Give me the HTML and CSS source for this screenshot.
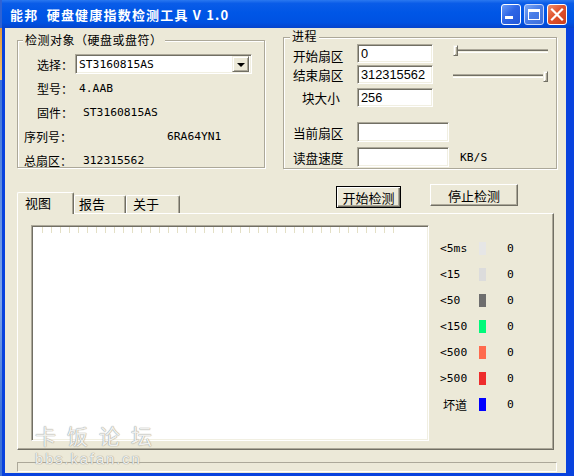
FILE: index.html
```html
<!DOCTYPE html>
<html lang="zh-CN">
<head>
<meta charset="utf-8">
<title>能邦 硬盘健康指数检测工具 V 1.0</title>
<link rel="stylesheet" href="styles.css">
</head>
<body>
<div class="window">
  <div class="titlebar">
    <span class="title">能邦&nbsp; 硬盘健康指数检测工具 V 1.0</span>
    <div class="tb-btns">
      <span class="tb tb-min"><svg width="18" height="19" viewBox="0 0 18 19"><rect x="3" y="11" width="8" height="3" fill="#fff"/></svg></span>
      <span class="tb tb-max"><svg width="18" height="19" viewBox="0 0 18 19"><rect x="3.5" y="4.5" width="11" height="10" fill="none" stroke="#fff"/><rect x="3" y="4" width="12" height="3" fill="#fff"/></svg></span>
      <span class="tb tb-close"><svg width="18" height="19" viewBox="0 0 18 19"><path d="M4 4.5 L14 14.5 M14 4.5 L4 14.5" stroke="#fff" stroke-width="2.2" stroke-linecap="square"/></svg></span>
    </div>
  </div>

  <div class="client">
    <div class="top-row">
      <div class="group info">
        <div class="group-title">检测对象（硬盘或盘符）</div>
        <div class="row r-in">
          <span class="lab-select">选择：</span>
          <div class="combo sunken">
            <span class="mono">ST3160815AS</span>
            <span class="combo-btn raised"><span class="tri"></span></span>
          </div>
        </div>
        <div class="row r-in"><span class="lab-model">型号：</span><span class="mono">4.AAB</span></div>
        <div class="row r-in"><span class="lab-fw">固件：</span><span class="mono">ST3160815AS</span></div>
        <div class="row r-out"><span class="lab-sn">序列号：</span><span class="mono">6RA64YN1</span></div>
        <div class="row r-out"><span class="lab-total">总扇区：</span><span class="mono">312315562</span></div>
      </div>

      <div class="group progress">
        <div class="group-title">进程</div>
        <div class="prow first">
          <span class="plabel">开始扇区</span>
          <span class="field sunken">0</span>
          <div class="slider s1"><span class="thumb raised"></span></div>
        </div>
        <div class="prow m2">
          <span class="plabel">结束扇区</span>
          <span class="field sunken">312315562</span>
          <div class="slider s2"><span class="thumb raised end"></span></div>
        </div>
        <div class="prow m4">
          <span class="plabel ind">块大小</span>
          <span class="field sunken">256</span>
        </div>
        <div class="prow tall m15">
          <span class="plabel">当前扇区</span>
          <span class="field wide sunken"></span>
        </div>
        <div class="prow tall m5">
          <span class="plabel">读盘速度</span>
          <span class="field wide sunken"></span>
          <span class="unit mono">KB/S</span>
        </div>
      </div>
    </div>

    <div class="mid-row">
      <div class="tabs">
        <span class="tab active t1">视图</span>
        <span class="tab t2">报告</span>
        <span class="tab t3">关于</span>
      </div>
      <span class="btn default">开始检测</span>
      <span class="btn stop">停止检测</span>
    </div>

    <div class="panel">
      <div class="chart"></div>
      <div class="legend">
        <div class="lrow"><span class="lname mono">&lt;5ms</span><span class="sw c1"></span><span class="lval mono">0</span></div>
        <div class="lrow"><span class="lname mono">&lt;15</span><span class="sw c2"></span><span class="lval mono">0</span></div>
        <div class="lrow"><span class="lname mono">&lt;50</span><span class="sw c3"></span><span class="lval mono">0</span></div>
        <div class="lrow"><span class="lname mono">&lt;150</span><span class="sw c4"></span><span class="lval mono">0</span></div>
        <div class="lrow"><span class="lname mono">&lt;500</span><span class="sw c5"></span><span class="lval mono">0</span></div>
        <div class="lrow"><span class="lname mono">&gt;500</span><span class="sw c6"></span><span class="lval mono">0</span></div>
        <div class="lrow"><span class="lname cjk">坏道</span><span class="sw c7"></span><span class="lval mono">0</span></div>
      </div>
    </div>

    <div class="status"></div>
  </div>

  <div class="watermark">
    <div class="wm-cn">卡饭论坛</div>
    <div class="wm-en">bbs.kafan.cn</div>
  </div>
</div>
</body>
</html>
```

FILE: styles.css
```css
* { box-sizing: border-box; }
html, body { margin: 0; height: 100%; overflow: hidden; }
body {
  background: linear-gradient(to bottom, #2e62d4 0, #2e62d4 28px, #e29a3c 28px, #f0c070 80px, #3d72d8 80px, #7fa4e8 300px, #3d72d8 420px);
  font-family: "Noto Sans CJK SC", sans-serif;
  font-size: 12px;
  color: #000;
}
.window {
  position: relative;
  margin-left: 2px;
  width: 572px;
  height: 476px;
  display: flex;
  flex-direction: column;
}
.titlebar {
  flex: none;
  height: 28px;
  display: flex;
  align-items: center;
  padding: 0 7px 0 8px;
  background: linear-gradient(to bottom, #2a78f0 0, #0a5ce8 12%, #0056e6 45%, #0052e2 80%, #0644cc 100%);
  color: #fff;
}
.title {
  font-weight: bold;
  font-size: 13px;
  letter-spacing: 1.2px;
  white-space: pre;
  margin-top: 1px;
}
.tb-btns { margin-left: auto; display: flex; gap: 3px; margin-top: 1px; }
.tb {
  width: 20px; height: 21px;
  border: 1px solid #fff;
  border-radius: 3px;
  display: flex;
  overflow: hidden;
}
.tb svg { display: block; }
.tb-min { background: linear-gradient(135deg, #6a9cf8 0, #2e66e6 45%, #2358d8 100%); }
.tb-max { background: linear-gradient(135deg, #7aa6f4 0, #4a7ee8 45%, #3d6fdc 100%); border-color: #c8d8fb; }
.tb-close { background: linear-gradient(135deg, #f0906c 0, #e0532e 45%, #cc3f1c 100%); }

.client {
  flex: 1;
  background: #ECE9D8;
  border-style: solid;
  border-color: #0842de;
  border-width: 0 8px 3px 3px;
  padding: 9px 9px 0 12px;
}

/* group boxes */
.top-row { display: flex; align-items: flex-start; gap: 18px; }
.group {
  border: 1px solid #ACA899;
  box-shadow: inset 1px 1px 0 #fff, 1px 1px 0 #fff;
}
.group-title {
  display: table;
  margin: -8px 0 0 5px;
  padding: 0 2px;
  line-height: 14px;
  background: #ECE9D8;
  letter-spacing: 0.5px;
}
.info { width: 248px; height: 128px; margin-top: 3px; }
.info .group-title { margin-bottom: 5px; }
.progress { width: 274px; height: 132px; }
.progress .group-title { margin-left: 6px; margin-top: -9px; margin-bottom: 1px; font-size: 12px; letter-spacing: 0.5px; }

.row { display: flex; align-items: center; height: 24px; }
.r-in { padding-left: 19px; }
.r-out { padding-left: 6px; }
.lab-select { width: 38px; }
.lab-model { width: 42px; }
.lab-fw { width: 46px; }
.lab-sn { width: 143px; }
.lab-total { width: 59px; }
.mono { font-family: "DejaVu Sans Mono", "Liberation Mono", monospace; font-size: 11.3px; }

.sunken {
  background: #fff;
  border: 1px solid;
  border-color: #ACA899 #fff #fff #ACA899;
  box-shadow: inset 1px 1px 0 #716F64, inset -1px -1px 0 #F1EFE2;
}
.raised {
  background: #ECE9D8;
  border: 1px solid;
  border-color: #F1EFE2 #716F64 #716F64 #F1EFE2;
  box-shadow: inset 1px 1px 0 #fff, inset -1px -1px 0 #ACA899;
}
.combo {
  width: 177px; height: 20px;
  display: flex; align-items: center;
  padding: 0 2px 0 3px;
}
.combo-btn {
  margin-left: auto;
  width: 17px; height: 16px;
  display: flex; align-items: center; justify-content: center;
}
.tri {
  width: 0; height: 0;
  border-left: 4px solid transparent;
  border-right: 4px solid transparent;
  border-top: 4px solid #000;
  margin-top: 1px;
}

/* progress group */
.prow { display: flex; align-items: center; height: 19px; padding-left: 9px; }
.prow.tall { height: 20px; }
.m2 { margin-top: 2px; }
.m4 { margin-top: 4px; }
.m15 { margin-top: 15px; }
.m5 { margin-top: 5px; }
.plabel { width: 64px; font-size: 12.6px; line-height: 17px; }
.prow.first .plabel { margin-top: 4px; }
.plabel.ind { padding-left: 9px; }
.field {
  width: 76px; height: 19px;
  padding-left: 3px;
  font-family: "Liberation Sans", sans-serif;
  font-size: 12.8px;
  line-height: 17px;
}
.field.wide { width: 92px; height: 20px; }
.slider {
  margin-left: 20px;
  width: 95px; height: 11px;
  display: flex; align-items: center;
  background: linear-gradient(to bottom, #ACA899 0, #ACA899 1px, #716F64 1px, #716F64 2px, #F1EFE2 2px, #F1EFE2 3px, #fff 3px, #fff 4px) center / 100% 4px no-repeat;
}
.s1 { margin-bottom: 6px; }
.s2 { margin-top: 3px; }
.thumb { width: 5px; height: 11px; }
.thumb.end { margin-left: auto; }
.unit { margin-left: 11px; }

/* tabs + buttons */
.mid-row { display: flex; align-items: flex-start; height: 29px; margin-top: 15px; }
.tabs {
  align-self: flex-end;
  display: flex; align-items: flex-end;
  position: relative; z-index: 1;
  margin-bottom: -1px;
}
.tab {
  height: 18px;
  line-height: 16px;
  font-size: 13px;
  background: #ECE9D8;
  border-top: 1px solid #fff;
  border-left: 1px solid #fff;
  border-right: 1px solid #716F64;
  box-shadow: inset -1px 0 0 #ACA899;
  border-radius: 2px 2px 0 0;
  margin-bottom: 1px;
}
.tab.active { height: 22px; line-height: 19px; margin-bottom: 0; }
.t1 { width: 57px; padding-left: 7px; }
.t2 { width: 52px; padding-left: 4px; }
.t3 { width: 54px; padding-left: 6px; }
.btn {
  height: 22px;
  font-size: 13px;
  display: flex; align-items: center; justify-content: center;
  background: #ECE9D8;
}
.btn.default {
  width: 65px;
  margin-left: 156px;
  margin-top: 2px;
  border: 1px solid #000;
  box-shadow: inset 1px 1px 0 #fff, inset -1px -1px 0 #716F64, inset -2px -2px 0 #ACA899;
}
.btn.stop {
  width: 88px;
  margin-left: 29px;
  border: 1px solid;
  border-color: #fff #716F64 #716F64 #fff;
  box-shadow: inset -1px -1px 0 #ACA899;
}

/* tab panel */
.panel {
  width: 537px; height: 237px;
  display: flex; align-items: flex-start;
  padding: 11px 0 0 13px;
  border: 1px solid;
  border-color: #fff #716F64 #716F64 #fff;
  box-shadow: inset -1px -1px 0 #ACA899;
}
.chart {
  width: 398px; height: 216px;
  border: 1px solid;
  border-color: #ACA899 #fff #fff #ACA899;
  box-shadow: inset 1px 1px 0 #716F64, inset -1px -1px 0 #F1EFE2;
  background-color: #fff;
  background-image: repeating-linear-gradient(to right, #E4E0C6 0, #E4E0C6 1px, transparent 1px, transparent 9px);
  background-size: 352px 6px;
  background-position: 10px 1px;
  background-repeat: no-repeat;
}
.legend { margin-left: 11px; margin-top: 10px; }
.lrow { display: flex; align-items: center; height: 26px; }
.lname { width: 39px; }
.lname.cjk { font-size: 12px; padding-left: 3px; }
.sw { width: 7px; height: 13px; }
.lval { margin-left: 21px; }
.c1 { background: #E6E6E6; }
.c2 { background: #DCDCDC; }
.c3 { background: #6E6E6E; }
.c4 { background: #00FA7A; }
.c5 { background: #FF6A4D; }
.c6 { background: #EE2C2C; }
.c7 { background: #0000FF; }

.status {
  margin-top: 12px;
  width: 540px; height: 10px;
  border: 1px solid;
  border-color: #ACA899 #fff #fff #ACA899;
}

/* watermark overlay */
.watermark {
  position: absolute;
  left: 33px;
  top: 422px;
  color: rgba(255, 255, 255, 0.85);
  text-shadow: 0 0 1px #9a9a90, 0 0 1px #9a9a90;
  pointer-events: none;
}
.wm-cn { font-size: 21px; letter-spacing: 11px; line-height: 26px; }
.wm-en { font-family: "Liberation Sans", sans-serif; font-size: 15px; letter-spacing: 1.8px; line-height: 18px; margin-top: 2px; }
```
